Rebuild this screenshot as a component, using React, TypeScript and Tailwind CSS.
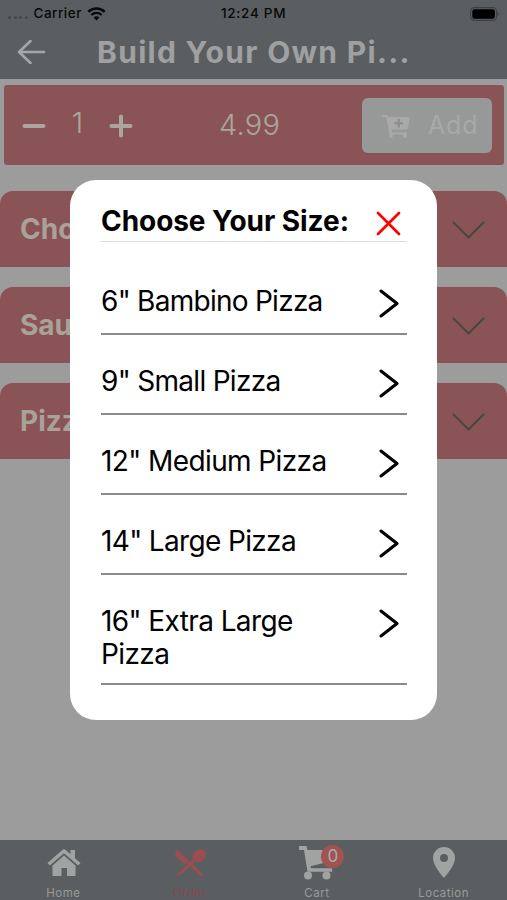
import { useState } from 'react';

const sizes = [
  { label: '6" Bambino Pizza', tracking: 'tracking-[-0.73px]' },
  { label: '9" Small Pizza', tracking: 'tracking-[-0.7px]' },
  { label: '12" Medium Pizza', tracking: 'tracking-[-0.6px]' },
  { label: '14" Large Pizza', tracking: 'tracking-[-0.65px]' },
  { label: '16" Extra Large Pizza', tracking: 'tracking-[-0.6px]' },
];

const sections = ['Cho', 'Sau', 'Pizz'];

function StatusBar() {
  return (
    <div className="relative flex h-[27px] items-center px-2 text-[13.5px] font-medium text-[#080909]">
      <div className="flex gap-[2.5px] pt-2">
        {[0, 1, 2, 3].map((i) => (
          <span key={i} className="size-[3px] rounded-full bg-[#454849]" />
        ))}
      </div>
      <span className="ml-[6px] tracking-[0.5px]">Carrier</span>
      <svg className="ml-[5px] h-[14px] w-[19px]" viewBox="0 0 19 14" fill="none" stroke="currentColor">
        <path d="M1.3 4.9a11.8 11.8 0 0 1 16.4 0" strokeWidth="2.5" />
        <path d="M4.3 8a7.5 7.5 0 0 1 10.4 0" strokeWidth="2.4" />
        <path d="M9.5 13.6l-2.9-3a4.2 4.2 0 0 1 5.8 0z" fill="currentColor" stroke="none" />
      </svg>
      <span className="absolute left-[221px] tracking-[0.7px]">12:24 PM</span>
      <svg className="ml-auto h-[14px] w-[29px]" viewBox="0 0 29 14">
        <rect x="0.6" y="0.6" width="26" height="12.8" rx="3.8" fill="none" stroke="#3e4142" strokeWidth="1.1" />
        <rect x="2.3" y="2.3" width="22.6" height="9.4" rx="2.3" fill="#000" />
        <path d="M27.5 5v4c1.6-.5 1.6-3.5 0-4z" fill="#3e4142" />
      </svg>
    </div>
  );
}

function Header() {
  return (
    <header className="h-[79px] shrink-0 bg-[#5a5e60]">
      <StatusBar />
      <div className="flex h-[50px] items-center pl-[17px]">
        <svg className="h-[24px] w-[29px]" viewBox="0 0 29 24" fill="none" stroke="#a5a6a6" strokeWidth="2.6" strokeLinecap="round" strokeLinejoin="round">
          <path d="M27 12H2M13.5 1L2 12l11.5 11" />
        </svg>
        <h1 className="ml-[51px] whitespace-nowrap text-[30px] font-bold leading-[50px] tracking-[1.3px] text-[#9fa0a1]">
          Build Your Own Pi...
        </h1>
      </div>
    </header>
  );
}

function OrderBar() {
  const [qty, setQty] = useState(1);

  return (
    <div className="ml-1 mr-[3px] mt-[6px] flex h-[80px] shrink-0 items-center rounded-[3px] bg-[#8a5457] font-light text-[#aca69e]">
      <button className="ml-[18px] mt-px" onClick={() => setQty(Math.max(1, qty - 1))}>
        <svg className="h-[24px] w-[24px]" viewBox="0 0 24 24" stroke="#aba59f" strokeWidth="4" strokeLinecap="round">
          <path d="M2.5 12h19" />
        </svg>
      </button>
      <span className="w-[63px] pb-[4px] text-center text-[29px]">{qty}</span>
      <button className="mt-px" onClick={() => setQty(qty + 1)}>
        <svg className="h-[24px] w-[24px]" viewBox="0 0 24 24" stroke="#aba59f" strokeWidth="4" strokeLinecap="round">
          <path d="M2.5 12h19M12 2.5v19" />
        </svg>
      </button>
      <span className="ml-[86px] w-[62px] whitespace-nowrap text-[29px] tracking-[0.3px]">4.99</span>
      <button className="ml-auto mr-[12px] flex h-[55px] w-[130px] items-center rounded-[6px] bg-[#979898] pl-[20px] text-[#a9a9a9]">
        <svg className="mt-[3px] h-[24px] w-[28px]" viewBox="0 0 28 24" fill="#a9a9a9">
          <path d="M0 0h5.2l1.3 2H26.5c.8 0 1.1.5 1 1.2l-1.6 10c-.1.8-.5 1.2-1.3 1.200H9.6l.4 3H25v2H24.5a2 2 0 1 1-3 0H10.5a2 2 0 1 1-3 0L4.2 2H0z" />
          <path d="M15.5 4v3h-3v2.5h3v3H18v-3h3V7h-3V4z" fill="#909090" />
        </svg>
        <span className="ml-[18px] mt-[2px] text-[25px] font-normal tracking-[0.8px]">Add</span>
      </button>
    </div>
  );
}

function Section({ title }: { title: string }) {
  return (
    <div className="flex h-[76px] shrink-0 items-center rounded-t-[13px] bg-[#8a5457] pl-[20px] pr-[22px]">
      <span className="text-[28px] font-bold text-[#a8a29a]">{title}</span>
      <svg className="ml-auto mt-px h-[18px] w-[33px]" viewBox="0 0 33 18" fill="none" stroke="#4b4743" strokeWidth="2.3" strokeLinecap="round" strokeLinejoin="round">
        <path d="M1.5 1.5L16.5 16.5L31.5 1.5" />
      </svg>
    </div>
  );
}

function SizeModal() {
  return (
    <div className="absolute left-[70px] top-[180px] flex h-[540px] w-[367px] flex-col rounded-[26px] bg-white pl-[31px] pr-[30px] text-black">
      <div className="flex h-[62px] shrink-0 items-center justify-between border-b border-[#dcdcdc] pr-[6px] pt-[20px]">
        <h2 className="whitespace-nowrap text-[28px] font-bold leading-[34px] tracking-[-0.06px]">Choose Your Size:</h2>
        <svg className="mt-[5px] h-[25px] w-[25px]" viewBox="0 0 25 25" stroke="#f00" strokeWidth="2.7" strokeLinecap="round">
          <path d="M2 2l21 21M23 2L2 23" />
        </svg>
      </div>
      <div className="flex flex-col pt-[13px]">
        {sizes.map((s) => (
          <button
            key={s.label}
            className="flex min-h-[80px] items-start justify-between border-b-2 border-[#8a8a8a] pb-[12px] pr-[8px] pt-[30px] text-left"
          >
            <span className={`w-[240px] text-[28px] leading-[33px] ${s.tracking}`}>{s.label}</span>
            <svg className="mt-[4px] h-[29px] w-[20px]" viewBox="0 0 20 29" fill="none" stroke="#000" strokeWidth="3" strokeLinecap="round" strokeLinejoin="round">
              <path d="M2 2l16 12.5L2 27" />
            </svg>
          </button>
        ))}
      </div>
    </div>
  );
}

function HomeIcon() {
  return (
    <svg className="ml-[2px] h-[28px] w-[34px]" viewBox="0 0 34 28" fill="#a1a2a2">
      <path d="M17 6.5L28.5 16.5V27H20V19h-5.5v8H5.5V16.5z" />
      <path d="M17 .3c.6 0 1 .2 1.4.5L23.5 5.2V1H28v8.2l5.5 4.8-2.2 2.6L17 4.2 2.7 16.6.5 14 15.6.8c.4-.3.8-.5 1.4-.5z" />
    </svg>
  );
}

function OrderIcon() {
  return (
    <svg className="h-[28px] w-[32px]" viewBox="0 0 32 28">
      <g stroke="#9a4e51" strokeLinecap="round" fill="none">
        <path d="M4.8 25.5L23 8.5" strokeWidth="3" />
        <path d="M27 25.5L15 14" strokeWidth="3.4" />
      </g>
      <path d="M3.3.8L14.7 11.6l-4.2 4L2.6 8.2C.6 6.2.8 3 3.3.8z" fill="#9a4e51" />
      <ellipse cx="25" cy="6.8" rx="7.3" ry="5.9" transform="rotate(-38 25 6.8)" fill="#9a4e51" />
    </svg>
  );
}

function CartIcon() {
  return (
    <div className="relative">
      <svg className="h-[34px] w-[35px]" viewBox="0 0 35 34" fill="#a1a2a2">
        <path d="M0 0h7.5l1 4H33v11L11.5 20.2l.5 2H33.2v3.5H8.5L5 4H0z" />
        <circle cx="9" cy="29.5" r="4" />
        <circle cx="27.5" cy="29.5" r="4" />
      </svg>
      <span className="absolute left-[22px] top-[-1px] flex size-[23px] items-center justify-center rounded-full bg-[#a05350] text-[17px] font-normal leading-none text-[#adacac]">
        0
      </span>
    </div>
  );
}

function PinIcon() {
  return (
    <svg className="h-[31px] w-[22px]" viewBox="0 0 22 31" fill="#a1a2a2">
      <path fillRule="evenodd" d="M11 0a11 11 0 0 1 11 11c0 8-11 20-11 20S0 19 0 11A11 11 0 0 1 11 0zm0 7a4 4 0 1 0 0 8 4 4 0 0 0 0-8z" />
    </svg>
  );
}

const tabs = [
  { label: 'Home', icon: <HomeIcon />, color: 'text-[#999b9b]' },
  { label: 'Order', icon: <OrderIcon />, color: 'text-[#87494d]' },
  { label: 'Cart', icon: <CartIcon />, color: 'text-[#999b9b]' },
  { label: 'Location', icon: <PinIcon />, color: 'text-[#999b9b]' },
];

export default function App() {
  return (
    <div className="relative flex h-[900px] w-[507px] flex-col overflow-hidden bg-[#9c9c9c] font-['Inter',sans-serif]">
      <Header />
      <OrderBar />
      <main className="mt-[26px] flex flex-1 flex-col gap-[20px]">
        {sections.map((title) => (
          <Section key={title} title={title} />
        ))}
      </main>
      <nav className="grid h-[60px] shrink-0 grid-cols-4 bg-[#5a5e60]">
        {tabs.map((t) => (
          <div key={t.label} className="flex flex-col items-center">
            <div className="flex h-[45.5px] items-center">{t.icon}</div>
            <span className={`text-[11.5px] leading-[14px] tracking-[0.5px] ${t.color}`}>{t.label}</span>
          </div>
        ))}
      </nav>
      <SizeModal />
    </div>
  );
}
